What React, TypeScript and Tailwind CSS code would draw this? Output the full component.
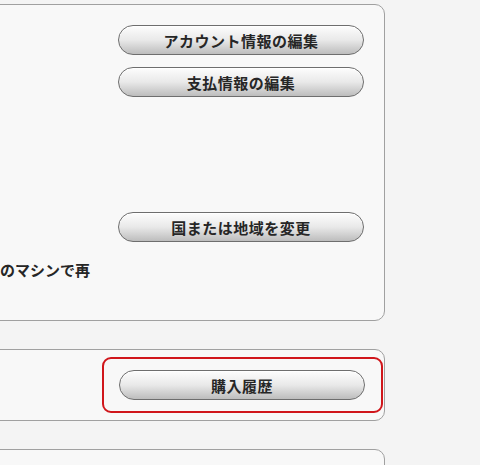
import React from "react";

const font = { fontFamily: '"Noto Sans CJK JP", "Noto Sans", sans-serif' };

function PillButton({ label }: { label: string }) {
  return (
    <button
      type="button"
      className="h-[30px] w-[246px] rounded-full border border-[#6e6e6e] bg-gradient-to-b from-[#fdfdfd] via-[#e9e9e9] to-[#bdbdbd] text-[15px] font-bold leading-none tracking-[0.5px] text-[#262626] shadow-[inset_0_1px_0_#ffffff]"
    >
      {label}
    </button>
  );
}

export default function App() {
  return (
    <div
      className="h-[465px] w-[480px] overflow-hidden bg-[#f4f4f4] pt-[4px]"
      style={font}
    >
      <div className="-ml-[20px] flex w-[405px] flex-col">
        {/* account panel */}
        <div className="flex h-[317px] flex-col rounded-[10px] border border-[#a0a0a0] bg-[#f8f8f8]">
          <div className="ml-[137px] mt-[20px] flex flex-col gap-[12px]">
            <PillButton label="アカウント情報の編集" />
            <PillButton label="支払情報の編集" />
          </div>
          <div className="ml-[137px] mt-[115px]">
            <PillButton label="国または地域を変更" />
          </div>
          <p className="ml-[19px] mt-[20px] text-[15px] font-bold leading-none text-[#262626]">
            のマシンで再
          </p>
        </div>

        {/* purchase history panel */}
        <div className="mt-[28px] h-[72px] rounded-[10px] border border-[#a0a0a0] bg-[#f8f8f8] pt-[7px]">
          <div className="ml-[121px] w-[281px] rounded-[9px] border-2 border-[#d0161b] px-[15px] pt-[11px] pb-[11px]">
            <PillButton label="購入履歴" />
          </div>
        </div>

        <div className="mt-[28px] h-[40px] rounded-[10px] border border-[#a0a0a0] bg-[#f8f8f8]" />
      </div>
    </div>
  );
}
